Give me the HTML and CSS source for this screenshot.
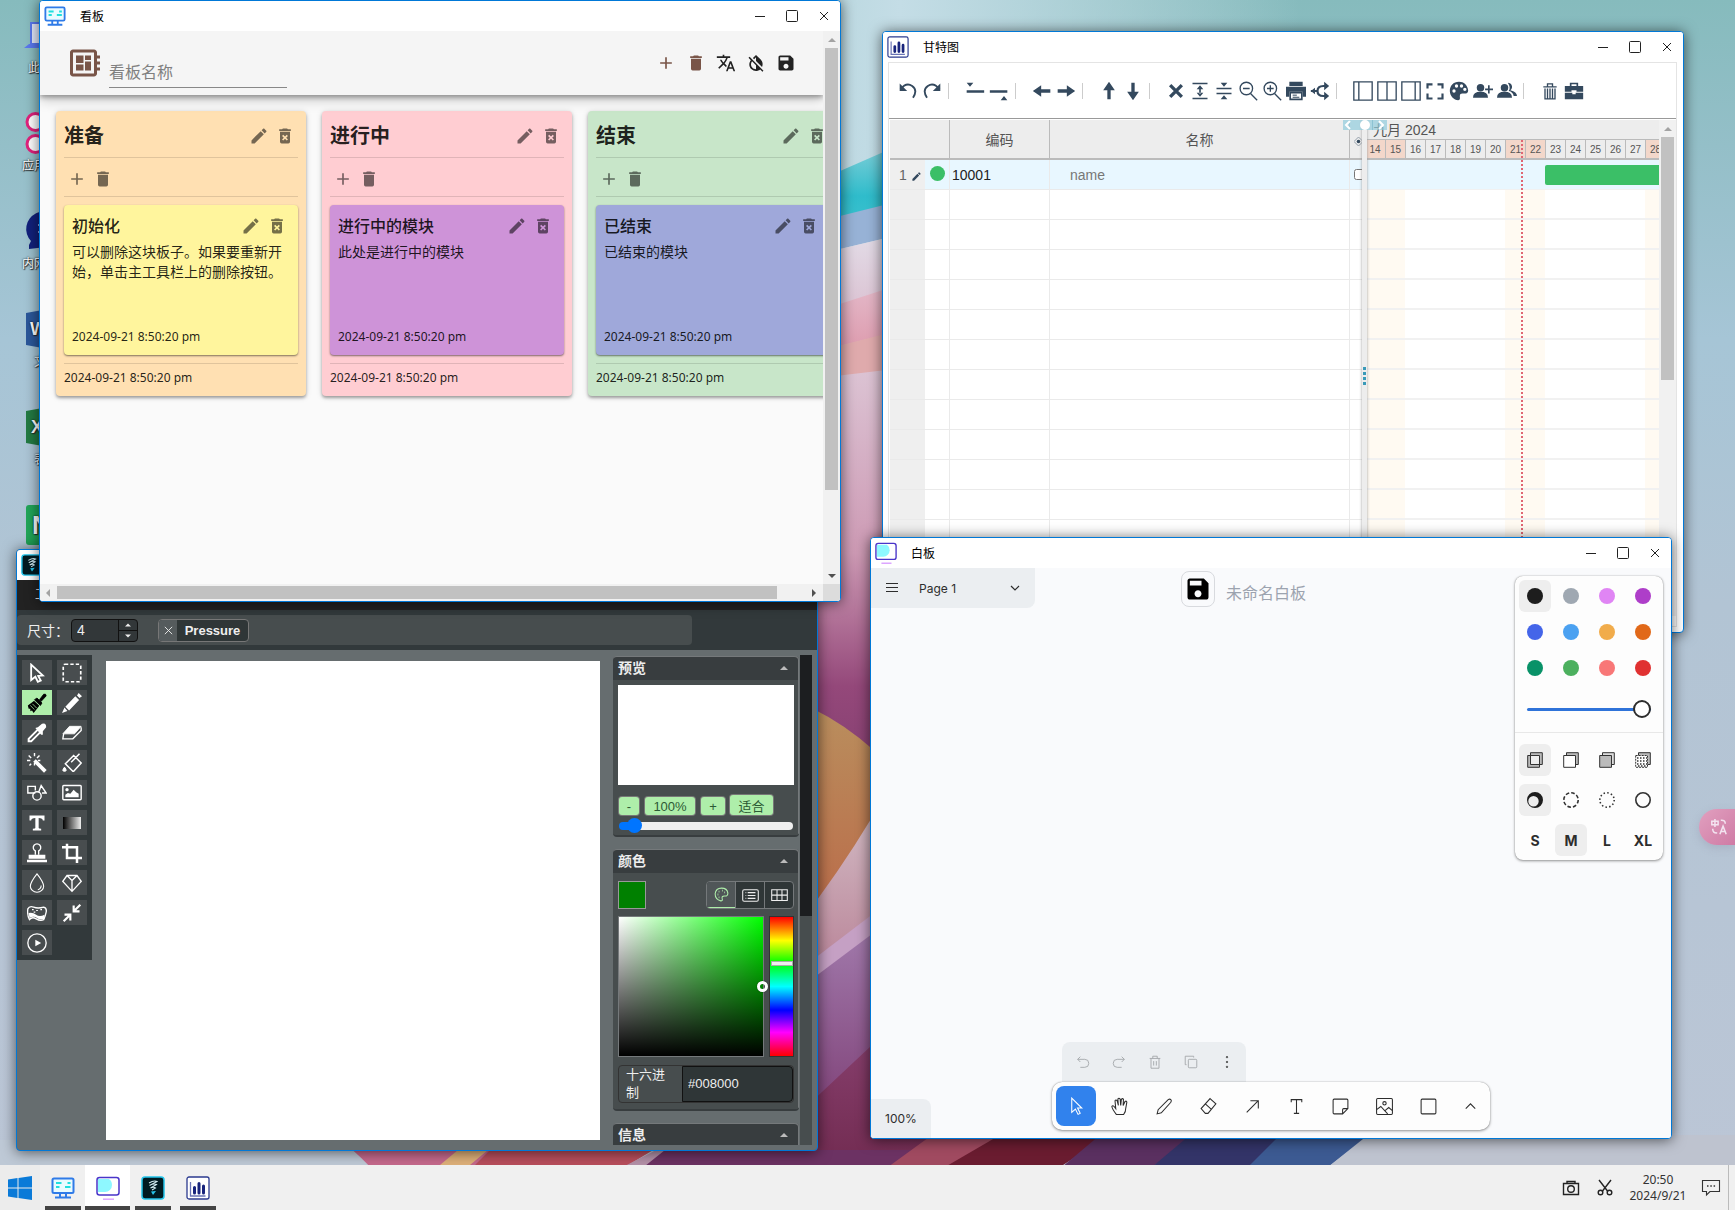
FILE: index.html
```html
<!DOCTYPE html>
<html lang="zh-CN">
<head>
<meta charset="utf-8">
<meta name="viewport" content="width=device-width, initial-scale=1">
<title>桌面</title>
<link rel="stylesheet" href="styles.css">
</head>
<body>
<svg class="sprite" aria-hidden="true">
  <symbol id="min" viewBox="0 0 12 12"><path d="M1 6.500h10" stroke="currentColor"/></symbol>
  <symbol id="max" viewBox="0 0 12 12"><rect x=".5" y=".5" width="11" height="11" rx="1" fill="none" stroke="currentColor"/></symbol>
  <symbol id="close" viewBox="0 0 12 12"><path d="M2 2l8 8M10 2l-8 8" stroke="currentColor"/></symbol>
  <symbol id="app-kanban" viewBox="0 0 24 24"><rect x="1.500" y="2.500" width="21" height="14.500" rx="1.500" fill="#e9fbff" stroke="#2f7be8" stroke-width="2"/><path d="M5 7h5.500M5 11h3.500M14 11h5.500M16.500 7h3" stroke="#22dede" stroke-width="2.200"/><path d="M9 17v4M15 17v4M4 21.500h16" stroke="#2f7be8" stroke-width="2"/></symbol>
  <symbol id="app-board" viewBox="0 0 24 24"><rect x="1" y="1.500" width="22" height="17.500" rx="2" fill="#fff"/><path d="M2 3h11q3 2 3 6a7 7 0 0 1-7 7H2z" fill="#8ef8ff"/><rect x="1" y="1.500" width="22" height="17.500" rx="2.500" fill="none" stroke="#4a35c9" stroke-width="1.500"/><path d="M7 23.200h11" stroke="#dca6ff" stroke-width="1.500"/></symbol>
  <symbol id="app-paint" viewBox="0 0 24 24"><rect x="1" y="1" width="22" height="22" rx="3" fill="#001b22" stroke="#22c4ea" stroke-width="1.500"/><path d="M8 7q5-3 8-1.500L8.500 9.500q4-2.500 7-1L9.500 12q3-1.500 5 0L11 14" fill="none" stroke="#cfeaf0" stroke-width="1.100"/><path d="M10 15.500l5-.5-3 4z" fill="#28c4ea"/></symbol>
  <symbol id="app-gantt" viewBox="0 0 24 24"><rect x="1" y="1" width="22" height="22" rx="2" fill="#fff" stroke="#2b3a8f" stroke-width="1.300"/><path d="M4.500 6v14h15" fill="none" stroke="#6a74b5" stroke-width="1.300"/><path d="M8.500 17v-5.500M13 17V7.500M17.500 17v-7" stroke="#18247c" stroke-width="3" stroke-linecap="round"/></symbol>
  <symbol id="pencil" viewBox="0 0 24 24"><path d="M20.710,7.040C21.100,6.650 21.100,6 20.710,5.630L18.370,3.290C18,2.900 17.350,2.900 16.960,3.290L15.120,5.120L18.870,8.870M3,17.250V21H6.750L17.810,9.930L14.060,6.180L3,17.250Z"/></symbol>
  <symbol id="delx" viewBox="0 0 24 24"><path d="M6,19A2,2 0 0,0 8,21H16A2,2 0 0,0 18,19V7H6V19M8.460,11.880L9.870,10.470L12,12.590L14.120,10.470L15.530,11.880L13.410,14L15.530,16.120L14.120,17.530L12,15.410L9.880,17.530L8.470,16.120L10.590,14L8.460,11.880M15.500,4L14.500,3H9.500L8.500,4H5V6H19V4H15.500Z"/></symbol>
  <symbol id="del" viewBox="0 0 24 24"><path d="M19,4H15.500L14.500,3H9.500L8.500,4H5V6H19M6,19A2,2 0 0,0 8,21H16A2,2 0 0,0 18,19V7H6V19Z"/></symbol>
  <symbol id="plus" viewBox="0 0 24 24"><path d="M19,13H13V19H11V13H5V11H11V5H13V11H19V13Z"/></symbol>
  <symbol id="translate" viewBox="0 0 24 24"><path d="M12.870,15.070L10.330,12.560L10.360,12.530C12.100,10.590 13.340,8.360 14.070,6H17V4H10V2H8V4H1V6H12.170C11.500,7.920 10.440,9.750 9,11.350C8.070,10.320 7.300,9.190 6.690,8H4.690C5.420,9.630 6.420,11.170 7.670,12.560L2.580,17.580L4,19L9,14L12.110,17.110L12.870,15.070M18.500,10H16.500L12,22H14L15.120,19H19.870L21,22H23L18.500,10M15.880,17L17.500,12.670L19.120,17H15.880Z"/></symbol>
  <symbol id="invert" viewBox="0 0 24 24"><path d="M20.650 20.870l-2.350-2.350-6.300-6.290-3.560-3.570-1.420-1.410L4.270 4.500 3 5.770l2.780 2.780c-2.550 3.140-2.360 7.760.56 10.690C7.900 20.800 9.950 21.580 12 21.580c1.790 0 3.570-.59 5.030-1.780l2.700 2.700L21 21.230l-.35-.36zM12 19.590c-1.600 0-3.110-.62-4.240-1.760C6.620 16.690 6 15.190 6 13.590c0-1.320.43-2.570 1.210-3.600L12 14.770v4.820zM12 5.100v4.580l7.250 7.260c1.370-2.960.84-6.570-1.600-9.010L12 2.270l-3.700 3.700 1.410 1.410L12 5.100z"/></symbol>
  <symbol id="save" viewBox="0 0 24 24"><path d="M17 3H5c-1.110 0-2 .9-2 2v14c0 1.100.89 2 2 2h14c1.100 0 2-.9 2-2V7l-4-4zm-5 16c-1.660 0-3-1.340-3-3s1.340-3 3-3 3 1.340 3 3-1.340 3-3 3zm3-10H5V5h10v4z"/></symbol>
  <symbol id="board" viewBox="0 0 24 24"><path d="M22 9V7h-2V5c0-1.100-.9-2-2-2H4c-1.100 0-2 .9-2 2v14c0 1.100.9 2 2 2h14c1.100 0 2-.9 2-2v-2h2v-2h-2v-2h2v-2h-2V9h2zm-4 10H4V5h14v14zM6 13h5v4H6zm6-6h4v3h-4zM6 7h5v5H6zm6 4h4v6h-4z"/></symbol>
  <symbol id="up" viewBox="0 0 8 8"><path d="M0 6l4-4 4 4z"/></symbol>
  <symbol id="down" viewBox="0 0 8 8"><path d="M0 2l4 4 4-4z"/></symbol>
  <symbol id="left" viewBox="0 0 8 8"><path d="M6 0L2 4l4 4z"/></symbol>
  <symbol id="right" viewBox="0 0 8 8"><path d="M2 0l4 4-4 4z"/></symbol>
</svg>

<div class="desktop">
  <svg class="wallpaper" viewBox="0 0 1735 1210" preserveAspectRatio="none" aria-hidden="true">
    <defs>
      <linearGradient id="sky" x1="0" y1="0" x2="0" y2="1"><stop offset="0" stop-color="#86bbbd"/><stop offset=".12" stop-color="#94bfc8"/><stop offset=".28" stop-color="#a6c5d6"/><stop offset=".5" stop-color="#b2c4d4"/><stop offset="1" stop-color="#bcc6d6"/></linearGradient>
      <linearGradient id="glow" x1="0" y1="0" x2="1" y2="0"><stop offset="0" stop-color="#cfe3ec" stop-opacity="0"/><stop offset=".5" stop-color="#c4dde6"/><stop offset="1" stop-color="#cfe3ec" stop-opacity="0"/></linearGradient>
      <linearGradient id="teal" x1="0" y1="0" x2="0" y2="1"><stop offset="0" stop-color="#8fd2da"/><stop offset=".6" stop-color="#2fbccb"/><stop offset="1" stop-color="#3fc3cf"/></linearGradient>
      <linearGradient id="lav" x1="0" y1="0" x2="0" y2="1"><stop offset="0" stop-color="#e3dde8"/><stop offset="1" stop-color="#d9bccd"/></linearGradient>
      <linearGradient id="pink" x1="0" y1="0" x2="0" y2="1"><stop offset="0" stop-color="#e4bccb"/><stop offset="1" stop-color="#dc94a8"/></linearGradient>
      <linearGradient id="plum" x1="0" y1="0" x2="0" y2="1"><stop offset="0" stop-color="#dcc4d4"/><stop offset=".35" stop-color="#cd9ab4"/><stop offset=".6" stop-color="#94487a"/><stop offset="1" stop-color="#703364"/></linearGradient>
      <linearGradient id="gold" x1="0" y1="0" x2="0" y2="1"><stop offset="0" stop-color="#b9915f"/><stop offset="1" stop-color="#bb6445"/></linearGradient>
      <linearGradient id="ivory" x1="0" y1="0" x2="0" y2="1"><stop offset="0" stop-color="#ddd3d8"/><stop offset="1" stop-color="#b4788e"/></linearGradient>
      <linearGradient id="violet" x1="0" y1="0" x2="0" y2="1"><stop offset="0" stop-color="#a987b8"/><stop offset="1" stop-color="#78356c"/></linearGradient>
      <linearGradient id="wine" x1="0" y1="0" x2="0" y2="1"><stop offset="0" stop-color="#8c4474"/><stop offset="1" stop-color="#6b2548"/></linearGradient>
    </defs>
    <rect width="1735" height="1210" fill="url(#sky)"/>
    <rect x="500" width="800" height="1210" fill="url(#glow)"/>
    <path d="M760 206L920 136V198L760 236z" fill="url(#teal)"/>
    <path d="M760 236L920 196V230L760 268z" fill="#97b2d6"/>
    <path d="M760 268L920 230V290L760 330z" fill="url(#lav)"/>
    <path d="M760 330L920 278V326L760 366z" fill="url(#pink)"/>
    <path d="M760 366L920 325V366L760 392z" fill="#dfaaac"/>
    <path d="M760 385L920 366V900H760z" fill="url(#plum)"/>
    <path d="M760 690Q850 710 920 800V960H760z" fill="url(#gold)"/>
    <path d="M760 970Q850 870 920 730V960L760 1010z" fill="url(#ivory)"/>
    <path d="M760 1005L920 882V1040L760 1160z" fill="url(#violet)"/>
    <path d="M760 1000L920 878V898L760 1018z" fill="#c5a0c4"/>
    <path d="M600 1210L760 1150L920 1000L1000 1210z" fill="url(#wine)"/>
    <path d="M0 1140H360L380 1210H0z" fill="#bec9d6"/>
    <path d="M340 1140H500L540 1210H400Q380 1170 340 1140z" fill="#c5698c"/>
    <path d="M440 1165l30-25h30l-30 25z" fill="#deb079"/>
    <path d="M500 1140H670L620 1170H470z" fill="#b84e5c"/>
    <path d="M660 1148H800L700 1170H617z" fill="#b491a8"/>
    <path d="M665 1150H960L880 1170H640z" fill="#6c3263"/>
    <path d="M932 1135H1010L950 1167H888z" fill="#a04a60"/>
    <path d="M1000 1135H1110L1060 1167H945z" fill="#6a1c30"/>
    <path d="M1100 1135H1200L1152 1167H1062z" fill="#5a3060"/>
    <path d="M1190 1135H1290L1248 1167H1152z" fill="#333468"/>
    <path d="M1280 1135H1370L1328 1167H1248z" fill="#3c5a92"/>
    <path d="M1368 1135H1735V1167H1328z" fill="#bec3cf"/>
  </svg>

  <nav class="shortcuts" aria-label="桌面图标">
    <a class="shortcut" href="#pc"><svg viewBox="0 0 40 40"><rect x="5" y="8" width="30" height="21" fill="#e3e9fb" stroke="#5a78ee" stroke-width="2"/><path d="M-2 33l5-4h34l5 4z" fill="#5a78ee"/></svg><span>此电脑</span></a>
    <a class="shortcut" href="#apps"><svg viewBox="0 0 40 40" fill="none" stroke="#e0217c" stroke-width="3"><circle cx="9.500" cy="9" r="8.500"/><circle cx="31" cy="9" r="8.500"/><circle cx="9.500" cy="31" r="8.500"/><circle cx="31" cy="31" r="8.500"/></svg><span>应用市场</span></a>
    <a class="shortcut" href="#chat"><svg viewBox="0 0 40 40"><path d="M3 38V34L5 30A19 18 0 1 1 20 36z" fill="#12217c"/><path d="M12 14h3M12 21h3" stroke="#8fa0e0" stroke-width="2"/></svg><span>内网聊天</span></a>
    <a class="shortcut" href="#doc"><svg viewBox="0 0 40 40"><path d="M0 4L22 0v40L0 36z" fill="#2b579a"/><rect x="22" y="4" width="18" height="32" fill="#fff"/><text x="4" y="26" font-size="18" font-weight="700" fill="#fff" font-family="Liberation Sans, sans-serif">W</text></svg><span>文档</span></a>
    <a class="shortcut" href="#sheet"><svg viewBox="0 0 40 40"><path d="M0 4L22 0v40L0 36z" fill="#237a43"/><rect x="22" y="4" width="18" height="32" fill="#fff"/><text x="5" y="26" font-size="18" font-weight="700" fill="#fff" font-family="Liberation Sans, sans-serif">X</text></svg><span>表格</span></a>
    <a class="shortcut" href="#note"><svg viewBox="0 0 40 40"><rect width="40" height="40" rx="3" fill="#21a558"/><text x="6" y="29" font-size="26" font-weight="700" fill="#fff" font-family="Liberation Sans, sans-serif">N</text></svg><span>笔记</span></a>
  </nav>

  <button class="float-translate" aria-label="翻译"><svg viewBox="0 0 20 20" fill="none" stroke="currentColor" stroke-width="1.700"><path d="M5.500 1v9M2 3.500h7v4H2zM12 2.500q5-.5 5 4M3 12q0 5 5 4.500M11 18l3.500-9 3.500 9M12.500 15h4.500"/></svg></button>

  <!-- 甘特图 -->
  <section class="window window-gantt">
    <header class="titlebar"><svg class="app-icon"><use href="#app-gantt"/></svg><h2>甘特图</h2><div class="win-buttons"><button aria-label="最小化"><svg><use href="#min"/></svg></button><button aria-label="最大化"><svg><use href="#max"/></svg></button><button aria-label="关闭"><svg><use href="#close"/></svg></button></div></header>
    <div class="gantt">
      <div class="gantt-tools">
        <button aria-label="撤销"><svg viewBox="0 0 24 24"><path d="M3 10Q10 1 17 6t1 14" fill="none" stroke="currentColor" stroke-width="2.200"/><path d="M2 3v9h9z"/></svg></button>
        <button aria-label="重做"><svg viewBox="0 0 24 24"><path d="M21 10Q14 1 7 6t-1 14" fill="none" stroke="currentColor" stroke-width="2.200"/><path d="M22 3v9h-9z"/></svg></button><i></i>
        <button aria-label="上方插入"><svg viewBox="0 0 24 24"><path d="M2 11h21v3H2zM2 2h8l-4 5z"/></svg></button>
        <button aria-label="下方插入"><svg viewBox="0 0 24 24"><path d="M1 11h21v3H1zM14 23h8l-4-5z"/></svg></button><i></i>
        <button aria-label="左移"><svg viewBox="0 0 24 24"><path d="M1 12l10-7v5h11v4H11v5z"/></svg></button>
        <button aria-label="右移"><svg viewBox="0 0 24 24"><path d="M23 12L13 5v5H2v4h11v5z"/></svg></button><i></i>
        <button aria-label="上移"><svg viewBox="0 0 24 24"><path d="M12 1l7 10h-5v11h-4V11H5z"/></svg></button>
        <button aria-label="下移"><svg viewBox="0 0 24 24"><path d="M12 23l7-10h-5V2h-4v11H5z"/></svg></button><i></i>
        <button aria-label="删除"><svg viewBox="0 0 24 24"><path d="M5 5l14 14M19 5L5 19" stroke="currentColor" stroke-width="4"/></svg></button>
        <button aria-label="展开"><svg viewBox="0 0 24 24"><path d="M3 2h18v2H3zM3 20h18v2H3zM12 5l4 5H8zM12 19l4-5H8zM11 9h2v6h-2z"/></svg></button>
        <button aria-label="折叠"><svg viewBox="0 0 24 24"><path d="M3 8h18v2H3zM3 14h18v2H3zM12 7l4-5H8zM12 17l4 5H8z"/></svg></button>
        <button aria-label="缩小"><svg viewBox="0 0 24 24" fill="none" stroke="currentColor" stroke-width="1.600"><circle cx="10" cy="9" r="7.500"/><path d="M6 9h8M15 15l8 8"/></svg></button>
        <button aria-label="放大"><svg viewBox="0 0 24 24" fill="none" stroke="currentColor" stroke-width="1.600"><circle cx="10" cy="9" r="7.500"/><path d="M6 9h8M10 5v8M15 15l8 8"/></svg></button>
        <button aria-label="打印"><svg viewBox="0 0 24 24"><path d="M4 1h16v5H4zM0 7h24v12h-4v-6H4v6H0z"/><path d="M5 14h14v8H5z" fill="none" stroke="currentColor" stroke-width="2"/><path d="M8 17h5M8 19.500h8" stroke="currentColor" stroke-width="1.200"/></svg></button>
        <button aria-label="共享"><svg viewBox="0 0 24 24"><path d="M1 12h8M20 6h-4q-7 0-7 6t7 6h4" fill="none" stroke="currentColor" stroke-width="2.600"/><path d="M17 1l6 5-6 5zM17 13l6 5-6 5zM6 8v8l-5-4z"/></svg></button><i></i>
        <button aria-label="左列"><svg viewBox="0 0 24 24" fill="none" stroke="currentColor" stroke-width="1.600"><path d="M1 1h22v22H1zM7 1v22"/></svg></button>
        <button aria-label="中列"><svg viewBox="0 0 24 24" fill="none" stroke="currentColor" stroke-width="1.600"><path d="M1 1h22v22H1zM12 1v22"/></svg></button>
        <button aria-label="右列"><svg viewBox="0 0 24 24" fill="none" stroke="currentColor" stroke-width="1.600"><path d="M1 1h22v22H1zM17 1v22"/></svg></button>
        <button aria-label="全屏"><svg viewBox="0 0 24 24" fill="none" stroke="currentColor" stroke-width="2.600"><path d="M3 9V4h6M15 4h6v5M21 15v6h-6M9 21H3v-6"/></svg></button>
        <button aria-label="主题"><svg viewBox="0 0 24 24"><path fill-rule="evenodd" d="M12 1C5 1 1 6 1 12s5 11 10 11c3 0 2-3 2-5s1-3 3-3h4c2 0 3-2 3-4C22 5 18 1 12 1zM6 14a2 2 0 1 1 0-4 2 2 0 0 1 0 4zm3-6a2 2 0 1 1 0-4 2 2 0 0 1 0 4zm6 0a2 2 0 1 1 0-4 2 2 0 0 1 0 4zm4 4a2 2 0 1 1 0-4 2 2 0 0 1 0 4z"/></svg></button>
        <button aria-label="添加成员"><svg viewBox="0 0 24 24"><circle cx="9" cy="8" r="4.500"/><path d="M0 20q0-7 9-7t9 7zM18 5h2v10h-2z"/><path d="M14.500 9h9.500v2h-9.500z"/></svg></button>
        <button aria-label="成员"><svg viewBox="0 0 24 24"><circle cx="9" cy="8" r="4.500"/><path d="M0 20q0-7 9-7t9 7zM13 2a5 5 0 0 1 3 9q8 2 8 7h-4q-1-5-6-6 3-4-1-10z"/></svg></button><i></i>
        <button aria-label="清空"><svg viewBox="0 0 24 24" fill="none" stroke="currentColor" stroke-width="1.600"><path d="M4 7h16M6 9v12.500h12V9M9 6.500V3.500h6v3M9 9v12M12 9v12M15 9v12"/></svg></button>
        <button aria-label="工具箱"><svg viewBox="0 0 24 24"><path fill-rule="evenodd" d="M7 2h10v4h6v7h-8v-2H9v2H1V6h6zm2 2v2h6V4zM1 14h9v2h4v-2h9v8H1z"/></svg></button>
      </div>
      <div class="gantt-body">
        <table class="gantt-grid">
          <colgroup><col class="c-num"><col class="c-dot"><col class="c-code"><col class="c-name"><col class="c-chk"></colgroup>
          <thead><tr><th colspan="2"></th><th>编码</th><th>名称</th><th><svg class="eye" viewBox="0 0 10 10"><path d="M0 5l5-5 5 5-5 5z" fill="none" stroke="#8a96a3"/><circle cx="5" cy="5" r="2" fill="#34495e"/></svg></th></tr></thead>
          <tbody>
            <tr class="sel"><td class="num">1 <svg viewBox="0 0 24 24"><use href="#pencil"/></svg></td><td class="dot"><b></b></td><td class="code">10001</td><td class="name">name</td><td><input type="checkbox" aria-label="里程碑"></td></tr>
            <tr><td></td><td></td><td></td><td></td><td></td></tr><tr><td></td><td></td><td></td><td></td><td></td></tr><tr><td></td><td></td><td></td><td></td><td></td></tr><tr><td></td><td></td><td></td><td></td><td></td></tr><tr><td></td><td></td><td></td><td></td><td></td></tr><tr><td></td><td></td><td></td><td></td><td></td></tr><tr><td></td><td></td><td></td><td></td><td></td></tr><tr><td></td><td></td><td></td><td></td><td></td></tr><tr><td></td><td></td><td></td><td></td><td></td></tr><tr><td></td><td></td><td></td><td></td><td></td></tr><tr><td></td><td></td><td></td><td></td><td></td></tr><tr><td></td><td></td><td></td><td></td><td></td></tr><tr><td></td><td></td><td></td><td></td><td></td></tr><tr><td></td><td></td><td></td><td></td><td></td></tr>
          </tbody>
        </table>
        <div class="splitter"><div class="split-arrows"><svg viewBox="0 0 44 10" fill="none" stroke="#fff" stroke-width="2"><path d="M7 1L3 5l4 4M36 1l4 4-4 4"/><path d="M29.500 0v10" stroke="#8cc3d3" stroke-width="1"/><circle cx="22" cy="5" r="4" fill="#fff"/></svg></div><div class="split-dots"></div></div>
        <div class="timeline">
          <div class="month">九月 2024</div>
          <div class="days"><span class="we first">14</span><span class="we">15</span><span>16</span><span>17</span><span>18</span><span>19</span><span>20</span><span class="we">21</span><span class="we">22</span><span>23</span><span>24</span><span>25</span><span>26</span><span>27</span><span class="we">28</span></div>
          <div class="chart"><div class="task-row"><div class="bar"></div></div></div>
          <div class="today"></div>
        </div>
        <div class="vscroll grey"><svg><use href="#up"/></svg><div class="thumb"></div></div>
      </div>
    </div>
  </section>

  <!-- 画图 -->
  <section class="window window-paint">
    <header class="titlebar"><svg class="app-icon"><use href="#app-paint"/></svg><h2>画图</h2></header>
    <div class="paint-menu"><a href="#tools">工具</a></div>
    <div class="paint-attrs"><div class="attrs">
      <label for="size">尺寸：</label>
      <div class="num-box"><input id="size" type="text" value="4"><div class="spin"><button aria-label="增大"><svg><use href="#up"/></svg></button><button aria-label="减小"><svg><use href="#down"/></svg></button></div></div>
      <button class="pressure"><span class="x"><svg><use href="#close"/></svg></span><span class="t">Pressure</span></button>
    </div></div>
    <div class="paint-main">
      <div class="paint-tools">
        <button aria-label="选择"><svg viewBox="0 0 24 24"><path d="M5 2l14 13-5.500 .5 3 5.500-3.500 1.500-3-6-5 4z" stroke-width="2.200"/></svg></button>
        <button aria-label="选区"><svg viewBox="0 0 24 24"><rect x="1.500" y="1.500" width="21" height="21" rx="2" stroke-width="2" stroke-dasharray="4 2.500"/></svg></button>
        <button class="on" aria-label="画笔"><svg viewBox="0 0 24 24"><path d="M1 15l8-6 6 6-7 9-2-3-2 1v-3l-2 0z" fill="currentColor" stroke="none"/><path d="M9 8l3-2 6 6-2 3zM15 8l5-6.500q3-1 3 2L17 10z" fill="currentColor" stroke-width="1"/><path d="M4 15l5 5M6.500 13l5 5M8 8.500l7.500 7" stroke="#aeeeaa" stroke-width=".9"/></svg></button>
        <button aria-label="铅笔"><svg viewBox="0 0 24 24"><path d="M18 3l2-3 4 4-3 2zM16 4l4.500 4.500L8.500 21 4 16.500zM3 17.500l3.500 4L0 24z" fill="currentColor" stroke="none"/></svg></button>
        <button aria-label="吸管"><svg viewBox="0 0 24 24"><path d="M13 8L2 19v3h3l11-11" stroke-width="2.400"/><path d="M10 6l3-1 5-4q5-2 5 4l-4 5v4l-2 0z" fill="currentColor" stroke="none"/></svg></button>
        <button aria-label="橡皮"><svg viewBox="0 0 24 24"><path d="M9 4h14l-8 9H1z" fill="currentColor" stroke-linejoin="round"/><path d="M2 13l-1 6h12l10-10V5" stroke-width="1.600"/></svg></button>
        <button aria-label="魔棒"><svg viewBox="0 0 24 24"><path d="M9 9l13 13" stroke-width="4.500"/><path d="M9 0v4M2 3l3 3M0 9h4M3 15l2-2M15 3l-3 3M13 9h3M9 12v3" stroke-width="1.700"/></svg></button>
        <button aria-label="填充"><svg viewBox="0 0 24 24"><path d="M4 13L14 3l9 9-9 10h-1zM11 11L21 1" stroke-width="1.800"/><path d="M3 17q4 5 0 5t0-5z" fill="currentColor" stroke-width="1.200"/></svg></button>
        <button aria-label="形状"><svg viewBox="0 0 24 24"><path d="M10 12H1V4h9v5M14 11l3-8 6 9h-5" stroke-width="1.700"/><circle cx="12" cy="15.500" r="5" stroke-width="1.700"/></svg></button>
        <button aria-label="图片"><svg viewBox="0 0 24 24"><rect x="1" y="3" width="22" height="17" rx="1" stroke-width="1.700"/><path d="M4 17v-3l3-2 3 1 4-5 3 3 3 2v4z" fill="currentColor" stroke="none"/><circle cx="6" cy="8" r="2" fill="currentColor" stroke="none"/></svg></button>
        <button aria-label="文字"><svg viewBox="0 0 24 24"><path d="M3 3h18v6h-2q0-3-5-3v12q0 1 3 1v2H7v-2q3 0 3-1V6Q5 6 5 9H3z" fill="currentColor" stroke="none"/></svg></button>
        <button aria-label="渐变"><span class="ramp"></span></button>
        <button aria-label="图章"><svg viewBox="0 0 24 24"><path d="M10 14V9.500a4.500 4.500 0 1 1 4 0V14" stroke-width="1.600"/><path d="M2 14h20v5H2zM0 20h24v3H0z" fill="currentColor" stroke="none"/></svg></button>
        <button aria-label="裁剪"><svg viewBox="0 0 24 24"><path d="M6 1v17h18M0 5h18v19" stroke-width="3"/></svg></button>
        <button aria-label="模糊"><svg viewBox="0 0 24 24"><path d="M12 1q8 10 8 15a8 7 0 0 1-16 0Q4 11 12 1zM17 15q0 4-4 5" stroke-width="1.300"/></svg></button>
        <button aria-label="锐化"><svg viewBox="0 0 24 24"><path d="M6 3h12l5 7-11 12L1 10zM12 9v13M6 3l6 6 6-6" stroke-width="1.600"/></svg></button>
        <button aria-label="海绵"><svg viewBox="0 0 24 24"><path d="M1 7q2-4 7-2t12 0q4 1 3 6t-3 9q-4 2-9-1t-8 1q-3-5-2-13z" stroke-width="1.600"/><path d="M2 12q5-1 9 2t10 0v5q-5 2-9-1t-9 0z" fill="currentColor" stroke="none"/><path d="M6 8h2M11 9h2M16 8h2M8 11h2" stroke-width="1.400"/></svg></button>
        <button aria-label="收缩"><svg viewBox="0 0 24 24"><path d="M22 2l-7 7M14 3v7h7M2 22l7-7M3 14h7v7" stroke-width="2.600"/></svg></button>
        <button aria-label="播放"><svg viewBox="0 0 24 24"><circle cx="12" cy="12" r="11" stroke-width="1.600"/><path d="M10 8l7 4-7 4z" fill="currentColor" stroke="none"/></svg></button>
      </div>
      <div class="paper"></div>
      <div class="panels">
        <section class="panel"><h3>预览<svg><use href="#up"/></svg></h3>
          <div class="panel-body preview-body"><div class="preview"></div>
          <div class="zoom-row"><button>-</button><button class="z100">100%</button><button class="zplus">+</button><button class="fit">适合</button></div>
          <input class="zoom-range" type="range" min="0" max="100" value="5" aria-label="缩放"></div></section>
        <section class="panel"><h3>颜色<svg><use href="#up"/></svg></h3>
          <div class="panel-body"><div class="color-row"><button class="swatch" aria-label="当前颜色"></button><div class="tabs">
            <button class="on" aria-label="调色板"><svg viewBox="0 0 24 24"><path d="M12 3q-8 0-9 8 0 8 8 10 3 0 2-3-1-4 3-4 5 1 5-4-1-7-9-7z" stroke-width="1.500"/><path d="M8 8h1M13 6.500h1M16 9h1M6.500 12h1M8 16h1" stroke-width="2.500"/></svg></button>
            <button aria-label="列表"><svg viewBox="0 0 24 24"><rect x="1" y="4" width="22" height="16" rx="2" stroke-width="1.500"/><path d="M5 8h1M5 12h1M5 16h1M8 8h11M8 12h11M8 16h11" stroke-width="1.600"/></svg></button>
            <button aria-label="色板"><svg viewBox="0 0 24 24"><path d="M1 4h22v15H1zM1 11.500h22M8.500 4v15M15.500 4v15" stroke-width="1.500"/></svg></button></div></div>
          <div class="pick-row"><div class="sat"><b></b></div><div class="hue"><b></b></div></div>
          <div class="hex-row"><label for="hex">十六进制</label><input id="hex" type="text" value="#008000"></div></div></section>
        <section class="panel"><h3>信息<svg><use href="#up"/></svg></h3></section>
      </div>
      <div class="panel-scroll"><div></div></div>
    </div>
  </section>

  <!-- 看板 -->
  <section class="window window-kanban">
    <header class="titlebar"><svg class="app-icon"><use href="#app-kanban"/></svg><h2>看板</h2><div class="win-buttons"><button aria-label="最小化"><svg><use href="#min"/></svg></button><button aria-label="最大化"><svg><use href="#max"/></svg></button><button aria-label="关闭"><svg><use href="#close"/></svg></button></div></header>
    <div class="kanban-wrap">
      <div class="kanban">
        <div class="kanban-head"><svg class="logo"><use href="#board"/></svg><input type="text" placeholder="看板名称" aria-label="看板名称">
          <div class="kanban-actions"><button class="brown" aria-label="添加"><svg><use href="#plus"/></svg></button><button class="brown" aria-label="删除"><svg><use href="#del"/></svg></button><button aria-label="语言"><svg><use href="#translate"/></svg></button><button aria-label="反色"><svg><use href="#invert"/></svg></button><button aria-label="保存"><svg><use href="#save"/></svg></button></div></div>
        <div class="columns">
          <article class="column orange"><div class="col-head"><h3>准备</h3><button aria-label="编辑"><svg><use href="#pencil"/></svg></button><button aria-label="删除"><svg><use href="#delx"/></svg></button></div>
            <div class="col-tools"><button aria-label="添加"><svg><use href="#plus"/></svg></button><button aria-label="清空"><svg><use href="#del"/></svg></button></div>
            <div class="card yellow"><div class="card-head"><h4>初始化</h4><button aria-label="编辑"><svg><use href="#pencil"/></svg></button><button aria-label="删除"><svg><use href="#delx"/></svg></button></div><p>可以删除这块板子。如果要重新开始，单击主工具栏上的删除按钮。</p><time>2024-09-21 8:50:20 pm</time></div>
            <time class="col-time">2024-09-21 8:50:20 pm</time></article>
          <article class="column rose"><div class="col-head"><h3>进行中</h3><button aria-label="编辑"><svg><use href="#pencil"/></svg></button><button aria-label="删除"><svg><use href="#delx"/></svg></button></div>
            <div class="col-tools"><button aria-label="添加"><svg><use href="#plus"/></svg></button><button aria-label="清空"><svg><use href="#del"/></svg></button></div>
            <div class="card purple"><div class="card-head"><h4>进行中的模块</h4><button aria-label="编辑"><svg><use href="#pencil"/></svg></button><button aria-label="删除"><svg><use href="#delx"/></svg></button></div><p>此处是进行中的模块</p><time>2024-09-21 8:50:20 pm</time></div>
            <time class="col-time">2024-09-21 8:50:20 pm</time></article>
          <article class="column green"><div class="col-head"><h3>结束</h3><button aria-label="编辑"><svg><use href="#pencil"/></svg></button><button aria-label="删除"><svg><use href="#delx"/></svg></button></div>
            <div class="col-tools"><button aria-label="添加"><svg><use href="#plus"/></svg></button><button aria-label="清空"><svg><use href="#del"/></svg></button></div>
            <div class="card indigo"><div class="card-head"><h4>已结束</h4><button aria-label="编辑"><svg><use href="#pencil"/></svg></button><button aria-label="删除"><svg><use href="#delx"/></svg></button></div><p>已结束的模块</p><time>2024-09-21 8:50:20 pm</time></div>
            <time class="col-time">2024-09-21 8:50:20 pm</time></article>
        </div>
      </div>
      <div class="vscroll"><svg class="dim"><use href="#up"/></svg><div class="thumb"></div><svg class="end"><use href="#down"/></svg></div>
      <div class="hscroll"><svg class="dim"><use href="#left"/></svg><div class="thumb"></div><svg class="end"><use href="#right"/></svg></div>
      <div class="corner"></div>
    </div>
  </section>

  <!-- 白板 -->
  <section class="window window-board">
    <header class="titlebar"><svg class="app-icon"><use href="#app-board"/></svg><h2>白板</h2><div class="win-buttons"><button aria-label="最小化"><svg><use href="#min"/></svg></button><button aria-label="最大化"><svg><use href="#max"/></svg></button><button aria-label="关闭"><svg><use href="#close"/></svg></button></div></header>
    <div class="board">
      <div class="board-top">
        <div class="page-menu"><button aria-label="菜单"><svg viewBox="0 0 14 12"><path d="M1 1.500h12M1 5.500h12M1 9.500h12" stroke="currentColor"/></svg></button><button class="page">Page 1<svg viewBox="0 0 12 12" fill="none" stroke="currentColor" stroke-width="1.200"><path d="M2 4l4 4 4-4"/></svg></button></div>
        <div class="board-name"><button aria-label="保存"><svg><use href="#save"/></svg></button><input type="text" placeholder="未命名白板" aria-label="白板名称"></div>
        <div class="styles">
          <div class="swatches">
            <button class="on" aria-label="黑"><b class="k1"></b></button><button aria-label="灰"><b class="k2"></b></button><button aria-label="浅紫"><b class="k3"></b></button><button aria-label="紫"><b class="k4"></b></button>
            <button aria-label="蓝"><b class="k5"></b></button><button aria-label="浅蓝"><b class="k6"></b></button><button aria-label="黄"><b class="k7"></b></button><button aria-label="橙"><b class="k8"></b></button>
            <button aria-label="绿"><b class="k9"></b></button><button aria-label="浅绿"><b class="k10"></b></button><button aria-label="浅红"><b class="k11"></b></button><button aria-label="红"><b class="k12"></b></button>
          </div>
          <input class="opacity" type="range" min="0" max="100" value="100" aria-label="不透明度">
          <div class="style-rows">
            <button class="on" aria-label="无填充"><svg viewBox="0 0 16 16"><path d="M3.500 .7h11.800v11.800H3.500z" fill="#bbb" stroke="none"/><path d="M.7 3.500h11.800v11.800H.7z" fill="#bbb" stroke="none"/><path d="M3.500 3.500h9v9h-9z" fill="#eee" stroke="none"/><path d="M3.500 .7h11.800v11.800H3.500zM.7 3.500h11.800v11.800H.7z"/></svg></button>
            <button aria-label="半填充"><svg viewBox="0 0 16 16"><path d="M3.500 .7h11.800v11.800H3.500z" fill="#bbb"/><path d="M.7 3.500h11.800v11.800H.7z" fill="#fff"/></svg></button>
            <button aria-label="填充"><svg viewBox="0 0 16 16"><path d="M3.500 .7h11.800v11.800H3.500z" fill="#ddd"/><path d="M.7 3.500h11.800v11.800H.7z" fill="#bbb"/></svg></button>
            <button aria-label="图案"><svg viewBox="0 0 16 16"><path d="M3.500 .7h11.800v11.800H3.500z" fill="#bbb"/><path d="M.7 3.500h11.800v11.800H.7z" fill="#fff" stroke-dasharray="2 1"/><path d="M2 6h10M2 9h10M2 12h10M3 14h9" stroke-width="1.500" stroke-dasharray="1.500 1.500"/></svg></button>
            <button class="on" aria-label="手绘"><svg viewBox="0 0 16 16"><path fill-rule="evenodd" fill="#1d1d1d" stroke="none" d="M8 0a8 8 0 1 0 0 16A8 8 0 0 0 8 0zM6.500 4a5.200 5.200 0 1 1 0 10.400A5.200 5.200 0 0 1 6.500 4z"/></svg></button>
            <button aria-label="虚线"><svg viewBox="0 0 16 16"><circle cx="8" cy="8" r="7.200" stroke-width="1.600" stroke-dasharray="3.600 2.050"/></svg></button>
            <button aria-label="点线"><svg viewBox="0 0 16 16"><circle cx="8" cy="8" r="7.200" stroke-width="1.600" stroke-dasharray="1.500 2.270"/></svg></button>
            <button aria-label="实线"><svg viewBox="0 0 16 16"><circle cx="8" cy="8" r="7.200" stroke-width="1.600"/></svg></button>
            <button>S</button><button class="on">M</button><button>L</button><button>XL</button>
          </div>
        </div>
      </div>
      <div class="board-bottom">
        <button class="zoom">100%</button>
        <div class="center">
          <div class="actions">
            <button aria-label="撤销"><svg viewBox="0 0 18 18"><path d="M6 3L3 6l3 3M3 6h8a4 4 0 0 1 0 9H6"/></svg></button>
            <button aria-label="重做"><svg viewBox="0 0 18 18"><path d="M12 3l3 3-3 3M15 6H7a4 4 0 0 0 0 9h5"/></svg></button>
            <button aria-label="删除"><svg viewBox="0 0 18 18"><path d="M3 5h12M6.500 5V2.500h5V5M4.500 5v11h9V5M7.500 8v5M10.500 8v5"/></svg></button>
            <button aria-label="复制"><svg viewBox="0 0 18 18"><rect x="6" y="6" width="9.500" height="9.500" rx="1"/><path d="M4 12H2.500V2.500H12V4"/></svg></button>
            <button class="more" aria-label="更多"><svg viewBox="0 0 18 18" fill="currentColor"><circle cx="9" cy="3.500" r=".8"/><circle cx="9" cy="9" r=".8"/><circle cx="9" cy="14.500" r=".8"/></svg></button>
          </div>
          <div class="toolbar">
            <button class="on" aria-label="选择"><svg viewBox="0 0 18 18"><path d="M4.500 1l9.500 9.500H10l2.500 5-2 1-2.500-5-3.500 3z"/></svg></button>
            <button aria-label="抓手"><svg viewBox="0 0 18 18"><path d="M5 16.500Q1 11 .8 9q.7-1.500 2.200 0l1.500 2L3.800 3.500q.8-1.500 2 0L7 8 6.500 2q1-1.700 2.200 0L9.200 8l.6-5.800q1.200-1.300 2 0L11.500 8l1.800-3.800q1.500-.8 1.700.8l-1 5.500q0 4-2 6z"/></svg></button>
            <button aria-label="画笔"><svg viewBox="0 0 18 18"><path d="M2 16l1-4L12.500 2.500q1.500-1 2.500 0t0 2.500L6 15z"/></svg></button>
            <button aria-label="橡皮"><svg viewBox="0 0 18 18"><path d="M10.500 1.500l5.500 5-7.500 9H6l-4-4.500zM6 6.500l5.500 5"/></svg></button>
            <button aria-label="箭头"><svg viewBox="0 0 18 18"><path d="M3.500 14.500l11-11M7 3.500h7.500V11"/></svg></button>
            <button aria-label="文字"><svg viewBox="0 0 18 18"><path d="M4 5V2.500h10V5M9 2.500v13M6.500 15.500h5"/></svg></button>
            <button aria-label="便签"><svg viewBox="0 0 18 18"><path d="M3 2h12q1 0 1 1v8l-5 5H3q-1 0-1-1V3q0-1 1-1zM16 11h-4q-1 0-1 1v4"/></svg></button>
            <button aria-label="图片"><svg viewBox="0 0 18 18"><rect x="1.500" y="1.500" width="15" height="15" rx="1"/><circle cx="9" cy="6" r="1.600"/><path d="M1.500 12l4-3 6.500 7M9.500 13l3.500-3 3.500 3"/></svg></button>
            <button aria-label="矩形"><svg viewBox="0 0 18 18"><rect x="2" y="2" width="14" height="14" rx="1"/></svg></button>
            <button class="last" aria-label="更多工具"><svg viewBox="0 0 18 18"><path d="M4.500 11L9 6.500l4.500 4.500"/></svg></button>
          </div>
        </div>
      </div>
    </div>
  </section>
</div>

<footer class="taskbar">
  <button class="start" aria-label="开始"><svg viewBox="0 0 24 24" fill="#0a7ad8"><path d="M0 3.500L9.500 2v9.500H0zM10.500 1.900L24 0v11.500H10.500zM0 12.500h9.500V22L0 20.500zM10.500 12.500H24V24l-13.500-1.900z"/></svg></button>
  <button class="task" aria-label="看板"><svg><use href="#app-kanban"/></svg></button>
  <button class="task active" aria-label="白板"><svg><use href="#app-board"/></svg></button>
  <button class="task" aria-label="画图"><svg><use href="#app-paint"/></svg></button>
  <button class="task" aria-label="甘特图"><svg><use href="#app-gantt"/></svg></button>
  <div class="tray">
    <button class="tray-btn" aria-label="截图"><svg viewBox="0 0 18 18" fill="none" stroke="#222" stroke-width="1.400"><path d="M1.500 4.500h15v11h-15zM5 4.500V2.500h8v2"/><circle cx="9" cy="10" r="3.300"/></svg></button>
    <button class="tray-btn" aria-label="剪切"><svg viewBox="0 0 18 18" fill="none" stroke="#222" stroke-width="1.400"><path d="M3 1l8.500 11M15 1L6.500 12"/><circle cx="4.500" cy="13.500" r="2.300"/><circle cx="13.500" cy="13.500" r="2.300"/></svg></button>
    <div class="clock"><span>20:50</span><span>2024/9/21</span></div>
    <button class="msg" aria-label="通知"><svg viewBox="0 0 20 18" fill="none" stroke="#333" stroke-width="1.100"><path d="M1.500 1.500h17v11H9L5.500 16v-3.500h-4z"/><path d="M6 7h1.500M9.300 7h1.500M12.600 7h1.500" stroke-width="1.600"/></svg></button>
    <div class="peek"></div>
  </div>
</footer>
</body>
</html>
```
FILE: styles.css
```css
* { box-sizing: border-box; }
html, body { height: 100%; }
body {
  margin: 0;
  display: flex;
  flex-direction: column;
  overflow: hidden;
  font-family: "Noto Sans", "Noto Sans CJK SC", sans-serif;
  font-size: 12px;
  color: #222;
}
button { border: 0; padding: 0; margin: 0; background: none; color: inherit; font: inherit; display: flex; align-items: center; justify-content: center; }
input { font: inherit; color: inherit; margin: 0; min-width: 0; }
h2, h3, h4, p { margin: 0; }
svg { display: block; flex: none; fill: currentColor; }
.sprite { position: absolute; width: 0; height: 0; }

/* desktop */
.desktop { position: relative; flex: 1; min-height: 0; overflow: hidden; }
.wallpaper { position: absolute; left: 0; top: 0; width: 100%; height: 100vh; }
.shortcuts { position: relative; display: flex; flex-direction: column; width: 92px; }
.shortcut { height: 98px; padding-top: 15px; display: flex; flex-direction: column; align-items: center; gap: 5px; color: #fff; text-decoration: none; line-height: 16px; text-shadow: 0 0 2px #000, 1px 1px 1px #333; white-space: nowrap; }
.shortcut svg { width: 40px; height: 40px; overflow: visible; }
.float-translate { position: absolute; right: 0; top: 809px; width: 36px; height: 36px; border-radius: 18px 0 0 18px; background: linear-gradient(135deg, #e1a0bf, #cf7ba5); color: #f3e3f0; box-shadow: 0 3px 8px #8888a050; }
.float-translate svg { width: 18px; height: 18px; fill: none; margin-left: 4px; }

/* windows */
.window { position: absolute; isolation: isolate; width: 802px; height: 602px; display: flex; flex-direction: column; border: 1px solid #0078d7; border-radius: 4px; background: #fff; box-shadow: 0 1px 14px rgba(0, 0, 0, .6); overflow: hidden; }
.window-gantt { left: 882px; top: 31px; }
.window-paint { left: 16px; top: 549px; }
.window-kanban { left: 39px; top: 0; }
.window-board { left: 870px; top: 537px; }
.titlebar { flex: none; height: 30px; display: flex; align-items: center; background: #fff; color: #000; }
.titlebar h2 { font-size: 12px; font-weight: 400; margin-left: 14px; }
.app-icon { width: 22px; height: 22px; margin-left: 4px; }
.win-buttons { margin-left: auto; display: flex; color: #222; }
.win-buttons button { width: 32px; height: 30px; }
.win-buttons svg { width: 12px; height: 12px; }

.vscroll { width: 17px; padding: 0 2px; background: #f1f1f1; display: flex; flex-direction: column; align-items: center; color: #505050; }
.vscroll svg, .hscroll svg { width: 8px; height: 8px; margin: 5px 0 4px; }
.thumb { background: #c1c1c1; }
.dim { color: #a3a3a3; }

/* kanban */
.kanban-wrap { flex: 1; display: grid; grid-template: minmax(0, 1fr) 17px / minmax(0, 1fr) 17px; background: #fafafa; }
.kanban { overflow: hidden; display: flex; flex-direction: column; }
.kanban-head { position: relative; height: 64px; flex: none; display: flex; align-items: center; padding: 0 22px 0 27px; background: #f5f5f5; box-shadow: 0 2px 5px rgba(0, 0, 0, .35), 0 5px 12px rgba(0, 0, 0, .2); }
.logo { width: 36px; height: 36px; color: #795548; }
.kanban-head input { width: 178px; height: 32px; margin: 18px 0 0 6px; padding: 0; border: 0; border-bottom: 1px solid #888; background: none; font-size: 16px; }
.kanban-head input::placeholder { color: #808080; }
.kanban-actions { margin-left: auto; display: flex; }
.kanban-actions button { width: 30px; height: 30px; }
.kanban-actions svg { width: 20px; height: 20px; }
.brown { color: #795548; }
.columns { display: flex; gap: 16px; padding: 16px; align-items: flex-start; }
.column { flex: none; width: 250px; padding: 8px; border-radius: 4px; color: rgba(0, 0, 0, .87); box-shadow: 0 2px 3px rgba(0, 0, 0, .3), 0 1px 6px rgba(0, 0, 0, .15); }
.orange { background: #ffe0b2; } .rose { background: #ffcdd2; } .green { background: #c8e6c9; }
.yellow { background: #fff59d; } .purple { background: #ce93d8; } .indigo { background: #9fa8da; }
.column button { width: 26px; height: 26px; color: rgba(0, 0, 0, .54); }
.column button svg { width: 20px; height: 20px; }
.col-head { height: 39px; display: flex; align-items: center; padding-bottom: 4px; border-bottom: 1px solid rgba(0, 0, 0, .12); }
.col-head h3 { font-size: 20px; font-weight: 600; line-height: 24px; margin-right: auto; }
.col-tools { height: 39px; display: flex; align-items: center; padding-top: 3px; border-bottom: 1px solid rgba(0, 0, 0, .12); }
.card { height: 150px; margin: 8px 0; padding: 8px; border-radius: 4px; display: flex; flex-direction: column; box-shadow: 0 1px 2px rgba(0, 0, 0, .5); }
.card-head { height: 26px; display: flex; align-items: center; }
.card h4 { font-size: 16px; font-weight: 500; line-height: 24px; margin-right: auto; }
.card p { font-size: 14px; line-height: 20px; margin-top: 3px; }
.card time { margin-top: auto; line-height: 20px; }
.col-time { display: block; border-top: 1px solid rgba(0, 0, 0, .12); padding-top: 4px; line-height: 20px; }
.window-kanban .vscroll .thumb { width: 13px; height: 442px; }
.vscroll .end { margin-top: auto; }
.hscroll { height: 17px; padding: 2px 0; background: #f1f1f1; display: flex; align-items: center; color: #505050; }
.hscroll svg { margin: 0 5px 0 4px; }
.hscroll .end { margin-left: auto; }
.hscroll .thumb { width: 720px; height: 13px; }
.corner { background: #dcdcdc; }

/* gantt */
.gantt { flex: 1; min-height: 0; margin: 0 6px 5px 5px; border: 1px solid #e4e4e4; display: flex; flex-direction: column; font-family: "Liberation Sans", "Noto Sans CJK SC", sans-serif; font-size: 14px; }
.gantt-tools { flex: none; height: 56px; padding-left: 7px; display: flex; align-items: center; border-bottom: 1px solid #999; color: #34495e; }
.gantt-tools button { width: 24px; height: 24px; }
.gantt-tools svg { width: 20px; height: 20px; }
.gantt-tools svg[fill="none"] { fill: none; }
.gantt-tools i { width: 1px; height: 16px; margin: 0 14px 0 4px; background: #ccc; }
.gantt-body { flex: 1; min-height: 0; display: flex; margin: 1px 0 10px 1px; overflow: hidden; background: #fff; }
.gantt-grid { width: 472px; flex: none; table-layout: fixed; border-spacing: 0; height: 490px; }
.c-num { width: 35px; } .c-dot { width: 25px; } .c-code { width: 100px; } .c-name { width: 300px; } .c-chk { width: 12px; }
.gantt-grid th { height: 40px; padding: 0; font-weight: 400; color: #555; background: #ededed; border-right: 1px solid #bbb; border-bottom: 2px solid #bbb; }
.gantt-grid th:last-child, .gantt-grid td:last-child { border-right: 0; overflow: hidden; }
.gantt-grid td { height: 30px; padding: 0; border-right: 1px solid #eaeaea; border-bottom: 1px solid #eaeaea; }
.gantt-grid td:first-child { background: #efefef; border-right: 0; }
.gantt-grid .sel td { background: #e8f7ff; }
.gantt-grid .sel td.num { background: #efefef; color: #666; padding-left: 9px; white-space: nowrap; }
.num svg { display: inline-block; width: 11px; height: 11px; margin-left: 0; color: #34495e; vertical-align: -2px; }
.dot b { display: block; width: 15px; height: 15px; margin: 0 0 3px 5px; border-radius: 50%; background: #3bbf67; }
.gantt-grid .code { padding-left: 2px; }
.gantt-grid .name { padding-left: 20px; color: #777; }
.eye { width: 9px; height: 9px; margin: 4px 0 0 4px; }
.gantt-grid input { display: block; width: 11px; height: 11px; margin-left: 4px; }
.splitter { position: relative; z-index: 2; width: 5px; flex: none; background: #ededed; box-shadow: 0 0 3px #999; }
.split-arrows { position: absolute; left: -19px; top: 0; width: 44px; height: 10px; background: #8fcbdcb0; }
.split-arrows svg { width: 44px; height: 10px; fill: none; }
.split-dots { position: absolute; left: 1px; top: 247px; width: 3px; height: 19px; background: repeating-linear-gradient(#3a9ab8 0 3px, #fff0 3px 5px); }
.timeline { position: relative; flex: 1; min-width: 0; overflow: hidden; display: flex; flex-direction: column; }
.month { flex: none; height: 20px; line-height: 20px; padding-left: 6px; background: #ededed; border-bottom: 1px solid #bbb; color: #555; }
.days { flex: none; display: flex; height: 20px; border-bottom: 2px solid #bbb; font-size: 10px; line-height: 19px; color: #555; text-align: center; background: #ededed; }
.days span { flex: none; width: 20px; border-right: 1px solid #bbb; }
.days .first { width: 19px; padding-right: 2px; }
.days .we { background: #f3d7ca; }
.chart {
  flex: 1;
  background:
    repeating-linear-gradient(#fff0 0 28px, #f1f1f1 28px 30px),
    linear-gradient(90deg, #fffaf2 38px, #fff 38px 138px, #fffaf2 138px 178px, #fff 178px 278px, #fffaf2 278px);
}
.task-row { height: 29px; padding: 5px 0 0 178px; background: #e8f7ff; }
.bar { height: 20px; background: #3bbf67; border-radius: 2px 0 0 2px; }
.today { position: absolute; left: 154px; top: 20px; width: 2px; height: 100%; background: repeating-linear-gradient(#e06672 0 2px, #fff0 2px 4px); }
.grey svg { color: #a3a3a3; }
.grey .thumb { width: 13px; height: 243px; }

/* paint */
.window-paint { background: #666d6f; color: #eee; font-family: "Liberation Sans", "Noto Sans CJK SC", sans-serif; }
.paint-menu { flex: none; height: 30px; padding-left: 18px; background: #222; line-height: 30px; }
.paint-menu a { color: #ddd; text-decoration: none; }
.paint-attrs { flex: none; height: 40px; padding: 5px 0; background: #32393b; }
.attrs { width: 675px; height: 30px; padding: 0 10px; border-radius: 4px; background: #474d4e; display: flex; align-items: center; font-size: 14px; }
.attrs label { width: 44px; white-space: nowrap; }
.num-box { display: flex; width: 67px; height: 23px; border: 1px solid #111; border-radius: 4px; background: #323739; overflow: hidden; }
.num-box input { width: 46px; border: 0; padding: 0 0 0 5px; background: none; }
.spin { flex: 1; display: flex; flex-direction: column; border-left: 1px solid #111; }
.spin button { flex: 1; }
.spin button + button { border-top: 1px solid #111; }
.spin svg { width: 6px; height: 6px; }
.pressure { margin-left: 20px; width: 91px; height: 23px; border: 1px solid #777; border-radius: 4px; overflow: hidden; background: #2f3637; }
.pressure .x { width: 18px; height: 21px; display: flex; align-items: center; justify-content: center; background: #555b5d; }
.pressure .x svg { width: 11px; height: 11px; }
.pressure .t { flex: 1; font-size: 13px; font-weight: 700; }
.paint-main { flex: 1; min-height: 0; display: flex; align-items: stretch; padding: 5px 5px 5px 0; }
.paint-tools { align-self: flex-start; width: 75px; padding: 5px; background: #32393b; display: grid; grid-template-columns: 30px 30px; grid-auto-rows: 25px; gap: 5px; }
.paint-tools button { background: #484d4f; color: #fff; }
.paint-tools .on { background: #aeeeaa; color: #000; }
.paint-tools svg { width: 20px; height: 20px; stroke: currentColor; fill: none; }
.ramp { width: 18px; height: 12px; background: linear-gradient(90deg, #000, #eee); }
.paper { flex: 1; margin: 6px 13px 5px 14px; background: #fff; }
.panels { width: 186px; overflow: hidden; display: flex; flex-direction: column; gap: 12px; padding-top: 1px; }
.panel { flex: none; border-radius: 4px; background: #474d4e; border-bottom: 2px solid #383d3f; box-shadow: inset -1px 1px #75797b; }
.panel h3 { height: 24px; padding: 0 10px 2px 5px; margin: 0 1px 0 0; border-radius: 4px 4px 0 0; border-top: 1px solid #75797b; background: #383d3f; font-size: 14px; line-height: 20px; display: flex; align-items: center; justify-content: space-between; }
.panel h3 svg { width: 8px; height: 8px; color: #bbb; }
.panel-body { padding: 8px 5px 6px; }
.preview-body { padding: 5px 5px 1px; }
.preview { height: 100px; background: #fff; }
.zoom-row { display: flex; gap: 6px; margin: 10px 0 3px 1px; align-items: flex-end; }
.zoom-row button { width: 20px; height: 18px; border-radius: 3px; background: #aeeeaa; color: #2c5a34; font-size: 13px; box-shadow: 0 0 0 1px #777; }
.zoom-row .z100 { width: 50px; } .zoom-row .zplus { width: 24px; } .zoom-row .fit { width: 43px; height: 20px; margin-left: -1px; }
.zoom-range { display: block; width: 174px; height: 16px; margin: 0 0 0 1px; appearance: none; background: none; }
.zoom-range::-webkit-slider-runnable-track { height: 8px; border-radius: 4px; background: linear-gradient(90deg, #0075ff 15px, #efefef 15px); }
.zoom-range::-webkit-slider-thumb { appearance: none; width: 15px; height: 15px; margin-top: -4px; border-radius: 50%; background: #0075ff; }
.color-row { display: flex; justify-content: space-between; }
.swatch { width: 28px; height: 28px; border: 1px solid #999; background: #008000; }
.tabs { display: flex; width: 88px; height: 28px; border: 1px solid #75797b; border-radius: 4px; background: #2f3637; overflow: hidden; }
.tabs button { flex: 1; color: #eee; }
.tabs button + button { border-left: 1px solid #75797b; }
.tabs .on { background: #505658; color: #aeeeaa; border-bottom: 1px solid #aeeeaa; }
.tabs svg { width: 17px; height: 17px; fill: none; stroke: currentColor; }
.pick-row { display: flex; gap: 5px; height: 141px; margin: 7px 0 8px; }
.sat { position: relative; flex: 1; border: 1px solid #75797b; background: linear-gradient(to top, #000, #0000), linear-gradient(90deg, #fff, #0f0); }
.sat b { position: absolute; right: -5px; top: 64px; width: 11px; height: 11px; border: 3px solid #fff; border-radius: 50%; box-shadow: 0 0 1px #000; }
.hue { position: relative; width: 25px; border: 1px solid #333; background: linear-gradient(#f00, #ff0 17%, #0f0 33%, #0ff 50%, #00f 67%, #f0f 83%, #f00); }
.hue b { position: absolute; left: 1px; right: 0; top: 44px; height: 5px; background: #eee; border: 1px solid #aaa; }
.hex-row { display: flex; height: 38px; border: 1px solid #333; border-radius: 4px; font-size: 13px; line-height: 18px; overflow: hidden; }
.hex-row label { width: 63px; padding: 0 15px 0 7px; }
.hex-row input { flex: 1; border: 1px solid #111; border-radius: 0 4px 4px 0; padding: 0 5px; background: #2f3637; }
.panel-scroll { width: 12px; margin-left: 1px; background: #474d4e; }
.panel-scroll div { height: 261px; background: #1c1e20; }

/* whiteboard */
.board { flex: 1; display: flex; flex-direction: column; justify-content: space-between; background: #f9fafc; color: #2d2d2d; font-family: Inter, "Noto Sans CJK SC", sans-serif; }
.board-top { display: grid; grid-template-columns: 1fr 180px 1fr; align-items: start; }
.page-menu { display: flex; width: 164px; height: 40px; border-radius: 0 0 8px 0; background: #ebeef1; }
.page-menu button { width: 42px; }
.page-menu button > svg { width: 14px; height: 12px; }
.page-menu .page { flex: 1; justify-content: space-between; padding: 0 14px 0 6px; }
.page-menu .page svg { width: 12px; fill: none; }
.board-name { display: flex; align-items: center; padding-top: 3px; }
.board-name button { width: 34px; height: 36px; flex: none; border: 1px solid #d8dade; border-radius: 8px; color: #000; }
.board-name svg { width: 28px; height: 28px; }
.board-name input { width: 134px; margin: 8px 0 0 10px; padding: 0 1px; border: 0; background: none; font-size: 16px; }
.board-name input::placeholder { color: #9ca3af; }
.styles { justify-self: end; width: 148px; margin: 8px 8px 0 0; border-radius: 8px; background: #fdfdfd; box-shadow: 0 1px 3px rgba(0, 0, 0, .4), 0 0 1px rgba(0, 0, 0, .4); }
.swatches, .style-rows { display: grid; grid-template-columns: repeat(4, 32px); grid-auto-rows: 32px; gap: 4px; padding: 4px; }
.styles button { border-radius: 6px; font-size: 14px; font-weight: 700; }
.styles .on { background: #eee; }
.swatches b { width: 16px; height: 16px; border-radius: 50%; }
.k1 { background: #1d1d1d; } .k2 { background: #9fa8b2; } .k3 { background: #e085f4; } .k4 { background: #ae3ec9; }
.k5 { background: #4465e9; } .k6 { background: #4ba1f1; } .k7 { background: #f1ac4b; } .k8 { background: #e16919; }
.k9 { background: #099268; } .k10 { background: #4cb05e; } .k11 { background: #f87777; } .k12 { background: #e03131; }
.opacity { display: block; width: 124px; height: 20px; margin: 11px 12px 13px; appearance: none; background: none; }
.opacity::-webkit-slider-runnable-track { height: 3px; border-radius: 2px; background: #2f73d9; }
.opacity::-webkit-slider-thumb { appearance: none; width: 18px; height: 18px; margin-top: -8px; border: 2px solid #2d2d2d; border-radius: 50%; background: #fff; }
.style-rows { border-top: 1px solid #e8e8e8; padding-top: 11px; row-gap: 8px; }
.style-rows svg { width: 16px; height: 16px; fill: none; stroke: #333; }
.board-bottom { display: grid; grid-template-columns: 1fr auto 1fr; align-items: end; }
.zoom { width: 60px; height: 39px; border-radius: 0 8px 0 0; background: #ebeef1; }
.center { margin-bottom: 8px; }
.actions { display: flex; width: 184px; height: 40px; margin-left: 10px; padding: 0 1px 0 3px; border-radius: 8px 8px 0 0; background: #ebeef1; color: #a3a6a9; }
.actions button { width: 36px; }
.actions .more { color: #2d2d2d; }
.board-bottom svg { width: 16px; height: 16px; fill: none; stroke: currentColor; }
.toolbar { display: flex; gap: 4px; width: 438px; height: 48px; padding: 4px 0 4px 4px; border-radius: 10px; background: #fdfdfd; box-shadow: 0 1px 3px rgba(0, 0, 0, .4), 0 0 1px rgba(0, 0, 0, .4); }
.toolbar button { width: 40px; height: 40px; border-radius: 8px; }
.toolbar svg { width: 19px; height: 19px; }
.toolbar .on { background: #3182ed; color: #fff; }
.toolbar .last { width: 36px; }

/* taskbar */
.taskbar { position: relative; flex: none; height: 45px; display: flex; background: #f0f0f0; color: #333; }
.start { width: 40px; background: #ececec; }
.start svg { width: 24px; height: 24px; fill: #0a7ad8; }
.task { width: 45px; background: linear-gradient(#444, #444) center bottom / 36px 4px no-repeat; }
.task svg { width: 24px; height: 24px; }
.task.active { background: linear-gradient(#444, #444) center bottom / 45px 4px no-repeat #fff; }
.tray { margin-left: auto; display: flex; align-items: stretch; }
.tray svg { fill: none; }
.tray-btn { width: 34px; }
.tray-btn svg { width: 18px; height: 18px; }
.clock { width: 72px; display: flex; flex-direction: column; justify-content: center; text-align: center; line-height: 16px; }
.msg { width: 34px; }
.msg svg { width: 20px; height: 18px; }
.peek { width: 7px; border-left: 1px solid #bbb; }
```
